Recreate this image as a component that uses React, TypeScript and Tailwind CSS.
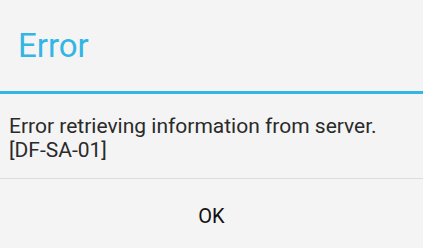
export default function App() {
  return (
    <div className="w-[423px] h-[248px] bg-[#f4f4f4] flex flex-col" style={{ fontFamily: "Roboto, 'Noto Sans', sans-serif" }}>
      <div className="h-[91px] flex items-center pl-[18px] text-[#33b5e5] text-[33px] leading-none">Error</div>
      <div className="h-[3px] bg-[#33b5e5]" />
      <div className="h-[84px] pl-[9px] pt-[20px] text-[21px] leading-[24px] text-[#2a2a2a]">
        <div>Error retrieving information from server.</div>
        <div>[DF-SA-01]</div>
      </div>
      <div className="h-px bg-[#dcdcdc]" />
      <div className="flex-1 flex items-center justify-center pt-[4px] text-[20px] text-[#111]">OK</div>
    </div>
  );
}
